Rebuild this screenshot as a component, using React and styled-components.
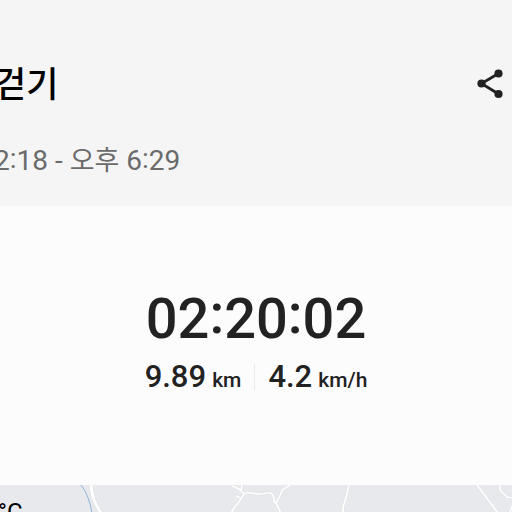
import { createGlobalStyle, styled } from "styled-components"

const GlobalStyle = createGlobalStyle`
  * {
    box-sizing: border-box;
  }

  body {
    margin: 0;
    background: #fcfcfc;
    color: #222;
    font-family: Roboto, "Noto Sans CJK KR", sans-serif;
  }
`

const Page = styled.main`
  display: flex;
  flex-direction: column;
  height: 100vh;
  overflow: hidden;
`

const Header = styled.header`
  flex: none;
  padding: 60px 8px 25px 0;
  background: #f5f5f5;
  overflow: hidden;
`

const TitleRow = styled.div`
  display: flex;
  align-items: center;
  justify-content: space-between;
  height: 48px;
`

const Title = styled.h1`
  margin: 0 0 0 -6px;
  padding-top: 4px;
  color: #000;
  font-size: 35px;
  font-weight: 500;
  line-height: 40px;
  white-space: nowrap;
`

const ShareButton = styled.button`
  display: flex;
  padding: 0;
  border: 0;
  background: none;
  color: #222;
  cursor: pointer;
`

const Period = styled.p`
  margin: 33px 0 0 -6px;
  color: #6b6b6b;
  font-size: 28px;
  line-height: 40px;
  white-space: nowrap;
`

const Meridiem = styled.span`
  font-size: 27px;
  line-height: 1;
`

const Summary = styled.section`
  flex: none;
  display: flex;
  flex-direction: column;
  align-items: center;
  padding: 80px 16px 88px;
`

const Duration = styled.div`
  font-size: 56px;
  font-weight: 500;
  line-height: 64px;
`

const Colon = styled.span`
  line-height: 1;
  vertical-align: ${(props) => props.$rise}px;
`

const Stats = styled.div`
  display: flex;
  align-items: center;
  margin-top: 6px;
`

const Stat = styled.div`
  font-size: 31px;
  font-weight: 500;
  line-height: 40px;
  white-space: nowrap;
`

const Unit = styled.span`
  margin-left: 6px;
  font-size: 21px;
  line-height: 1;
`

const Divider = styled.div`
  width: 1px;
  height: 26px;
  margin: 0 13px;
  background: #ebebeb;
`

const Map = styled.section`
  position: relative;
  flex: 1 1 0;
  min-height: 0;
  background: #e7e9ec;
  overflow: hidden;
`

const Roads = styled.svg`
  position: absolute;
  inset: 0;
  width: 100%;
`

const Temperature = styled.div`
  position: relative;
  padding-top: 13px;
  margin-left: -2px;
  color: #000;
  font-size: 24px;
  line-height: 28px;
`

function ShareIcon() {
  return (
    <svg width="28" height="30" viewBox="0 0 28 30" aria-hidden="true">
      <path d="M22.5 4.5 5.5 14.5l17 10.5" fill="none" stroke="currentColor" strokeWidth="2.8" />
      <circle cx="22.5" cy="4.5" r="4.1" fill="currentColor" />
      <circle cx="5.5" cy="14.5" r="4.1" fill="currentColor" />
      <circle cx="22.5" cy="25" r="4.1" fill="currentColor" />
    </svg>
  )
}

function RoadMap() {
  return (
    <Roads viewBox="0 0 512 28" aria-hidden="true">
      <path d="M81 0q8 10 11 28" fill="none" stroke="#8fb4dc" strokeWidth="1" />
      <path d="M91 0q1 15 10 28" fill="none" stroke="#d9dce0" strokeWidth="4" />
      <path d="M91 0q1 15 10 28" fill="none" stroke="#fff" strokeWidth="3" />
      <g fill="none" stroke="#dcdfe3" strokeWidth="2.4">
        <RoadLines />
      </g>
      <g fill="none" stroke="#fff" strokeWidth="1.7">
        <RoadLines />
      </g>
    </Roads>
  )
}

function RoadLines() {
  return (
    <>
      <path d="M231 28q4-7 8-11l5-8 2-1h6q9 2 15 0h4q4 3 3 9l2 1 5 10" />
      <path d="M232 1l7 3 5 5M242 0l-1 5M236 11l5 2" />
      <path d="M276 18l4-7 2-6 8-5" />
      <path d="M349 0l-3 13-3 9v6" />
      <path d="M477 0l21 28" />
      <path d="M500 0v5l7 7 5 1M512 21l-2 7" />
    </>
  )
}

function Time({ value, rise }) {
  return value.split(":").map((part, i) => (
    <span key={i}>
      {i > 0 && <Colon $rise={rise}>:</Colon>}
      {part}
    </span>
  ))
}

function Measure({ value, unit }) {
  return (
    <Stat>
      {value}
      <Unit>{unit}</Unit>
    </Stat>
  )
}

function App() {
  return (
    <>
      <GlobalStyle />
      <Page>
        <Header>
          <TitleRow>
            <Title>걷기</Title>
            <ShareButton type="button" aria-label="공유">
              <ShareIcon />
            </ShareButton>
          </TitleRow>
          <Period>
            <Time value="2:18" rise={2} /> - <Meridiem>오후</Meridiem> <Time value="6:29" rise={2} />
          </Period>
        </Header>
        <Summary>
          <Duration>
            <Time value="02:20:02" rise={5} />
          </Duration>
          <Stats>
            <Measure value="9.89" unit="km" />
            <Divider />
            <Measure value="4.2" unit="km/h" />
          </Stats>
        </Summary>
        <Map>
          <RoadMap />
          <Temperature>°C</Temperature>
        </Map>
      </Page>
    </>
  )
}

export default App
